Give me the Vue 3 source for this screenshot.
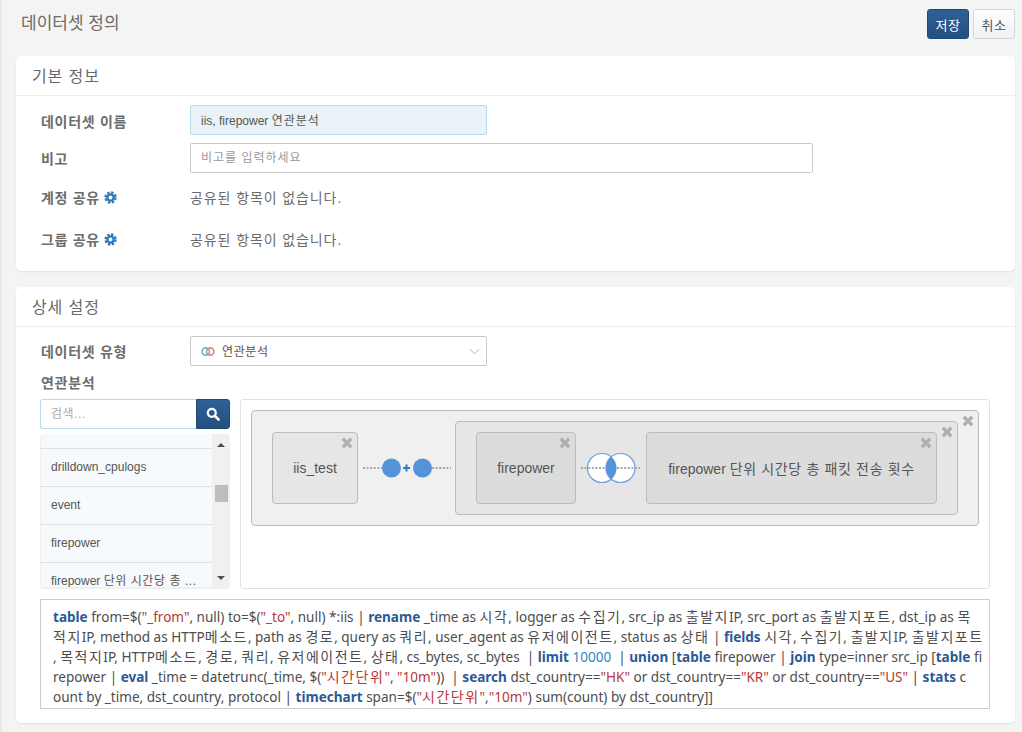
<script setup>
const items = [
  { name: '', ko: '' },
  { name: 'drilldown_cpulogs', ko: '' },
  { name: 'event', ko: '' },
  { name: 'firepower', ko: '' },
  { name: 'firepower ', ko: '단위 시간당 총 ...' }
]

// n = plain, b = keyword, s = string, d = number
const source = [
  [['b', 'table'], ['n', ' from=$('], ['s', '"_from"'], ['n', ', null) to=$('], ['s', '"_to"'], ['n', ', null) *:iis | '], ['b', 'rename'], ['n', ' _time as 시각, logger as 수집기, src_ip as 출발지IP, src_port as 출발지포트, dst_ip as 목']],
  [['n', '적지IP, method as HTTP메소드, path as 경로, query as 쿼리, user_agent as 유저에이전트, status as 상태 | '], ['b', 'fields'], ['n', ' 시각, 수집기, 출발지IP, 출발지포트']],
  [['n', ', 목적지IP, HTTP메소드, 경로, 쿼리, 유저에이전트, 상태, cs_bytes, sc_bytes \u00a0| '], ['b', 'limit'], ['n', ' '], ['d', '10000'], ['n', ' \u00a0| '], ['b', 'union'], ['n', ' ['], ['b', 'table'], ['n', ' firepower | '], ['b', 'join'], ['n', ' type=inner src_ip ['], ['b', 'table'], ['n', ' fi']],
  [['n', 'repower | '], ['b', 'eval'], ['n', ' _time = datetrunc(_time, $('], ['s', '"시간단위"'], ['n', ', '], ['s', '"10m"'], ['n', ')) \u00a0| '], ['b', 'search'], ['n', ' dst_country=='], ['s', '"HK"'], ['n', ' or dst_country=='], ['s', '"KR"'], ['n', ' or dst_country=='], ['s', '"US"'], ['n', ' | '], ['b', 'stats'], ['n', ' c']],
  [['n', 'ount by _time, dst_country, protocol | '], ['b', 'timechart'], ['n', ' span=$('], ['s', '"시간단위"'], ['n', ','], ['s', '"10m"'], ['n', ') sum(count) by dst_country]]']]
]

const lines = source.map((segs) =>
  segs.flatMap(([type, text]) =>
    text.split(/([가-힣]+)/).filter(Boolean).map((part) => ({
      text: part,
      cls: [type, /[가-힣]/.test(part) ? 'k' : '']
    }))
  )
)
</script>

<template>
  <div class="page">
    <header class="top">
      <h1 class="title">데이터셋 정의</h1>
      <div class="actions">
        <button class="btn primary">저장</button>
        <button class="btn plain">취소</button>
      </div>
    </header>

    <section class="card">
      <h2 class="card-head">기본 정보</h2>
      <div class="basic">
        <div class="row">
          <label class="lab nudge">데이터셋 이름</label>
          <div class="field filled short">iis, firepower <span class="ko">연관분석</span></div>
        </div>
        <div class="row">
          <label class="lab">비고</label>
          <div class="field long ph"><span class="ko">비고를 입력하세요</span></div>
        </div>
        <div class="row share">
          <label class="lab">계정 공유
            <svg class="gear" viewBox="0 0 14 14"><circle cx="7" cy="7" r="3.4" fill="none" stroke="#337ab7" stroke-width="2.6"/><circle cx="7" cy="7" r="5.4" fill="none" stroke="#337ab7" stroke-width="2.6" stroke-dasharray="2.6 1.64"/></svg>
          </label>
          <span class="val">공유된 항목이 없습니다.</span>
        </div>
        <div class="row share">
          <label class="lab">그룹 공유
            <svg class="gear" viewBox="0 0 14 14"><circle cx="7" cy="7" r="3.4" fill="none" stroke="#337ab7" stroke-width="2.6"/><circle cx="7" cy="7" r="5.4" fill="none" stroke="#337ab7" stroke-width="2.6" stroke-dasharray="2.6 1.64"/></svg>
          </label>
          <span class="val">공유된 항목이 없습니다.</span>
        </div>
      </div>
    </section>

    <section class="card second">
      <h2 class="card-head">상세 설정</h2>
      <div class="detail">
        <div class="row">
          <label class="lab">데이터셋 유형</label>
          <div class="field short select">
            <svg class="venn-mini" viewBox="0 0 16 12"><circle cx="5.5" cy="6" r="4.2" fill="none" stroke="#5bc0de" stroke-width="2"/><circle cx="10.5" cy="6" r="4.2" fill="none" stroke="#e9897f" stroke-width="2"/></svg>
            <span class="ko sel-text">연관분석</span>
            <svg class="chev" viewBox="0 0 12 7"><path d="M1 1l5 5 5-5" fill="none" stroke="#aaa" stroke-width="1"/></svg>
          </div>
        </div>
        <div class="sub">연관분석</div>
        <div class="builder">
          <div class="side">
            <div class="search">
              <div class="search-in">검색...</div>
              <button class="search-btn">
                <svg viewBox="0 0 14 14" width="14" height="14"><circle cx="5.8" cy="5.8" r="4" fill="none" stroke="#fff" stroke-width="2.2"/><path d="M9 9l3.6 3.6" stroke="#fff" stroke-width="2.6" stroke-linecap="round"/></svg>
              </button>
            </div>
            <div class="list">
              <ul class="items">
                <li v-for="(it, i) in items" :key="i" class="item" :class="{ cut: i === 0 }">{{ it.name }}<span class="ko-list">{{ it.ko }}</span></li>
              </ul>
              <div class="bar">
                <i class="arrow up"></i>
                <i class="thumb"></i>
                <i class="arrow down"></i>
              </div>
            </div>
          </div>

          <div class="canvas">
            <div class="group outer">
              <svg class="x" viewBox="0 0 10 10"><path d="M2 2l6 6M8 2l-6 6"/></svg>
              <div class="node n1"><svg class="x" viewBox="0 0 10 10"><path d="M2 2l6 6M8 2l-6 6"/></svg>iis_test</div>
              <svg class="link union" viewBox="0 0 97 40" width="97" height="40">
                <path d="M5 20H24M74 20H93" stroke="#a6a6a6" stroke-width="2" stroke-dasharray="2 1.6"/>
                <circle cx="33.500" cy="20" r="9.500" fill="#5393d8"/>
                <circle cx="64.500" cy="20" r="9.500" fill="#5393d8"/>
                <path d="M45 20h7M48.500 16.500v7" stroke="#337ab7" stroke-width="2"/>
              </svg>
              <div class="group inner">
                <svg class="x" viewBox="0 0 10 10"><path d="M2 2l6 6M8 2l-6 6"/></svg>
                <div class="node n2"><svg class="x" viewBox="0 0 10 10"><path d="M2 2l6 6M8 2l-6 6"/></svg>firepower</div>
                <svg class="link join" viewBox="0 0 70 40" width="70" height="40">
                  <circle cx="26" cy="20" r="14.500" fill="#fff" stroke="#6a9fdc" stroke-width="1.200"/>
                  <circle cx="44.500" cy="20" r="14.500" fill="#fff" stroke="#6a9fdc" stroke-width="1.200"/>
                  <path d="M5 20H64" stroke="#a6a6a6" stroke-width="2" stroke-dasharray="2 1.6"/>
                  <path d="M35.250 8.800A14.500 14.500 0 0 1 35.250 31.200A14.500 14.500 0 0 1 35.250 8.800Z" fill="#5393d8"/>
                </svg>
                <div class="node n3"><svg class="x" viewBox="0 0 10 10"><path d="M2 2l6 6M8 2l-6 6"/></svg><span>firepower <span class="ko-node">단위 시간당 총 패킷 전송 횟수</span></span></div>
              </div>
            </div>
          </div>
        </div>

        <div class="code">
          <div v-for="(line, i) in lines" :key="i" class="ln"><span v-for="(part, j) in line" :key="j" :class="part.cls">{{ part.text }}</span></div>
        </div>
      </div>
    </section>
  </div>
</template>

<style>
html, body { margin: 0; background: #f3f5f4; }
</style>

<style scoped>
.page {
  box-sizing: border-box;
  width: 1022px;
  height: 732px;
  overflow: hidden;
  padding: 9px 7px 0 16px;
  font-family: "Liberation Sans", "Noto Sans CJK KR", sans-serif;
  font-size: 13px;
  color: #676a6c;
  box-shadow: inset 3px 0 3px -2px rgba(0,0,0,.08);
}
.top { display: flex; justify-content: space-between; height: 47px; }
.title { margin: 4px 0 0 5px; font-size: 17px; font-weight: 400; line-height: 22px; color: #6f6a62; }
.actions { display: flex; gap: 4px; height: 30px; }
.btn { width: 42px; height: 30px; padding: 0; border-radius: 3px; font: inherit; font-size: 13px; letter-spacing: .6px; }
.primary { background: linear-gradient(#2f6196, #254f7e); border: 1px solid #204a75; color: #fff; }
.plain { background: linear-gradient(#fff, #eff1f4); border: 1px solid #d5d5d5; color: #555; }

.card { background: #fff; border-radius: 5px; box-shadow: 0 1px 2px rgba(0,0,0,.08); }
.second { margin-top: 16px; height: 436px; }
.card-head { box-sizing: border-box; height: 40px; margin: 0; padding: 10px 15px 0 16px; border-bottom: 1px solid #eceeee; font-size: 16px; font-weight: 400; line-height: 22px; letter-spacing: .9px; color: #676a6c; }

.basic { display: flex; flex-direction: column; gap: 8px; padding: 9px 0 16px 25px; }
.detail { padding: 9px 25px 0 24px; }
.row { display: flex; align-items: center; min-height: 30px; }
.share { height: 32px; }
.share + .share { margin-top: 2px; }
.lab { box-sizing: border-box; width: 149px; flex: none; font-size: 14px; font-weight: 700; letter-spacing: .7px; color: #6d6d6d; display: flex; align-items: center; gap: 4px; }
.nudge { padding-top: 2px; }
.detail .lab { width: 150px; padding-left: 1px; }
.gear { width: 13px; height: 13px; }
.val { font-size: 14px; letter-spacing: .9px; color: #6b6b6b; }
.field { box-sizing: border-box; height: 30px; line-height: 28px; padding: 0 10px; border: 1px solid #c9c9c9; border-radius: 2px; font-size: 12px; color: #555; background: #fff; }
.short { width: 297px; }
.long { width: 623px; }
.filled { background: #e9f2f6; border-color: #b4dcec; line-height: 30px; }
.ph { color: #999; }
.ko { letter-spacing: 1px; }
.select { display: flex; align-items: center; gap: 7px; position: relative; }
.sel-text { padding-top: 2px; line-height: 24px; letter-spacing: .6px; }
.venn-mini { width: 14px; height: 11px; }
.chev { position: absolute; right: 6px; top: 11px; width: 11px; height: 7px; }
.sub { margin: 7px 0 6px 1px; font-size: 14px; font-weight: 700; line-height: 20px; letter-spacing: .7px; color: #6d6d6d; }

.builder { display: flex; gap: 10px; }
.side { width: 190px; flex: none; }
.search { display: flex; height: 30px; }
.search-in { box-sizing: border-box; width: 156px; padding: 0 10px; line-height: 28px; border: 1px solid #b4dcec; border-right: 0; border-radius: 3px 0 0 3px; font-size: 12px; letter-spacing: .5px; color: #aaa; }
.search-btn { width: 34px; padding: 0; display: flex; align-items: center; justify-content: center; background: linear-gradient(#2f6196, #254f7e); border: 1px solid #204a75; border-radius: 0 3px 3px 0; }
.list { display: flex; height: 155px; margin-top: 5px; background: #f0f0f0; border-radius: 4px; overflow: hidden; }
.items { flex: 1; margin: 0 0 2px 1px; padding: 0; list-style: none; background: #f7fafd; overflow: hidden; }
.item { box-sizing: border-box; height: 38px; padding: 0 11px 0 10px; line-height: 37px; border-bottom: 1px solid #dedfe0; font-size: 12px; color: #555; white-space: pre; }
.ko-list { letter-spacing: .55px; }
.cut { height: 15px; }
.bar { width: 18px; flex: none; display: flex; flex-direction: column; align-items: center; }
.arrow { width: 0; height: 0; border-left: 4px solid transparent; border-right: 4px solid transparent; }
.up { margin-top: 9px; border-bottom: 4px solid #505050; }
.down { margin-top: 74px; border-top: 4px solid #505050; }
.thumb { width: 13px; height: 17px; margin-top: 38px; background: #bdbdbd; }

.canvas { box-sizing: border-box; width: 750px; height: 190px; padding: 10px; border: 1px solid #e2e2e2; border-radius: 3px; }
.group { box-sizing: border-box; position: relative; display: flex; align-items: center; border: 1px solid #bcbcbc; border-radius: 4px; }
.outer { width: 728px; height: 116px; padding-left: 20px; background: #f0f0f0; }
.inner { width: 503px; height: 94px; padding-left: 20px; background: #e6e6e6; }
.node { box-sizing: border-box; position: relative; display: flex; align-items: center; justify-content: center; height: 72px; border: 1px solid #bcbcbc; border-radius: 4px; font-size: 14px; color: #555; }
.n1 { width: 86px; background: #e6e6e6; }
.n2 { width: 100px; background: #dcdcdc; }
.n3 { width: 291px; background: #dcdcdc; }
.ko-node { letter-spacing: .65px; }
.link { flex: none; }
.x { position: absolute; top: 3px; right: 3px; width: 14px; height: 14px; }
.x path { fill: none; stroke: #b0b0b0; stroke-width: 2.4; }

.code { box-sizing: border-box; width: 950px; height: 110px; margin-top: 10px; padding: 6px 12px; border: 1px solid #ccc; font-family: "Noto Sans", "Noto Sans CJK KR", sans-serif; font-size: 13.550px; line-height: 20px; color: #4d4d4d; }
.ln { white-space: pre; height: 20px; }
.code .k { font-family: "Noto Sans CJK KR", sans-serif; font-size: 14px; letter-spacing: 1.5px; }
.code .b { color: #2a5a96; font-weight: 700; }
.code .s { color: #b83838; }
.code .d { color: #2f86c4; }
</style>
